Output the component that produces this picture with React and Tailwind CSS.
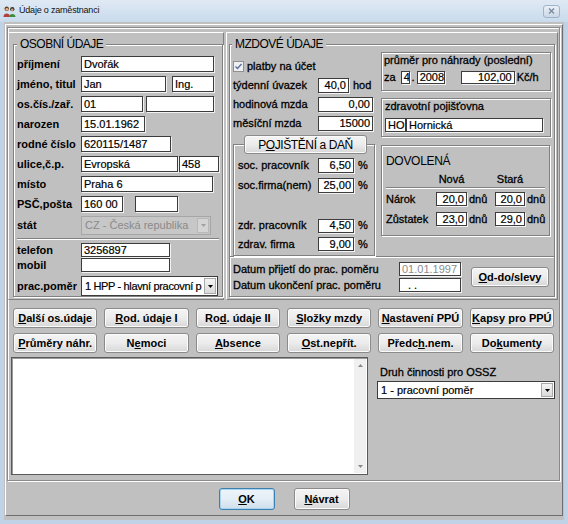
import React from "react";

const FONT = "font-['Liberation_Sans',Arial,sans-serif]";

function Box({ className = "", children, right = false, gray = false }) {
  return (
    <div
      className={`shrink-0 bg-white border border-[#3c3c3c] shadow-[1px_1px_0_#f2f2f2] text-[11px] leading-none flex items-center px-[2px] overflow-hidden whitespace-nowrap [-webkit-text-stroke:0.2px] ${
        right ? "justify-end" : ""
      } ${gray ? "text-[#8c8c8c] [-webkit-text-stroke:0px]" : "text-black"} ${className}`}
    >
      {children}
    </div>
  );
}

function LB({ className = "", children }) {
  return <span className={`text-[11px] font-bold leading-none whitespace-nowrap ${className}`}>{children}</span>;
}

function LN({ className = "", children }) {
  return (
    <span className={`text-[11px] leading-none whitespace-nowrap [-webkit-text-stroke:0.3px] ${className}`}>
      {children}
    </span>
  );
}

function Btn({ className = "", children }) {
  return (
    <button
      type="button"
      className={`flex items-center justify-center rounded-[3px] border border-[#8b8b8b] bg-linear-to-b from-[#f4f4f4] via-[#ececec] to-[#d7d7d7] text-[11px] font-bold text-black leading-none whitespace-nowrap shadow-[inset_0_0_0_1px_#fbfbfb] ${className}`}
    >
      {children}
    </button>
  );
}

function Arrow({ color = "#000" }) {
  return (
    <svg width="5" height="3" viewBox="0 0 5 3">
      <path d="M0 0h5L2.5 3z" fill={color} />
    </svg>
  );
}

function Combo({ className = "", textClass = "", children, disabled = false }) {
  return (
    <div
      className={`shrink-0 flex border ${
        disabled ? "border-[#a6a6a6] bg-[#c7c7c7] text-[#8a8a8a]" : "border-[#3c3c3c] bg-white text-black [-webkit-text-stroke:0.2px]"
      } ${className}`}
    >
      <div className={`flex-1 flex items-center px-[3px] text-[11px] leading-none overflow-hidden whitespace-nowrap ${textClass}`}>
        {children}
      </div>
      <div
        className={`w-[12px] my-[1px] mr-[1px] flex items-center justify-center border ${
          disabled ? "border-[#b8b8b8] bg-[#d4d4d4]" : "border-[#a9a9a9] bg-linear-to-b from-[#f5f5f5] to-[#dadada]"
        }`}
      >
        <Arrow color={disabled ? "#a0a0a0" : "#000"} />
      </div>
    </div>
  );
}

function Etched({ className = "", children }) {
  return (
    <div className={`border border-[#808080] shadow-[inset_1px_1px_0_#ffffff,1px_1px_0_#ffffff] ${className}`}>
      {children}
    </div>
  );
}

function TitleBar() {
  return (
    <div className="h-[22px] shrink-0 flex items-center pl-[3px] pr-[8px] bg-linear-to-b from-[#dfe9f4] to-[#c9dbec]">
      <svg width="13" height="13" viewBox="0 0 14 13">
        <circle cx="4" cy="3.5" r="2.4" fill="#6b3f22" />
        <circle cx="4.2" cy="4.2" r="1.5" fill="#e2b48e" />
        <path d="M0.5 12.5C0.5 7.5 7.5 7.5 7.5 12.5z" fill="#b3403a" />
        <circle cx="10" cy="4" r="2.3" fill="#2b2f28" />
        <circle cx="10" cy="4.6" r="1.4" fill="#d9a98a" />
        <path d="M6.5 12.5C6.5 8 13.5 8 13.5 12.5z" fill="#3d8b3b" />
      </svg>
      <span className="ml-[3px] text-[9px] tracking-[-0.2px] text-[#111]">Údaje o zaměstnanci</span>
      <div className="flex-1" />
      <div className="w-[17px] h-[13px] rounded-[3px] border border-[#9fb3c9] bg-linear-to-b from-[#eaf0f6] to-[#cbd8e6] flex items-center justify-center">
        <svg width="7" height="6" viewBox="0 0 7 6">
          <path d="M1 0.5l5 5M6 0.5l-5 5" stroke="#7a8ba0" strokeWidth="1.4" />
        </svg>
      </div>
    </div>
  );
}

function LeftPanel() {
  return (
    <div className="w-[216px] shrink-0 border border-t-white border-l-white border-r-[#808080] border-b-[#808080]">
      <fieldset className="mt-[4px] ml-[4px] mr-[1px] h-[260px] border border-[#808080] shadow-[inset_1px_1px_0_#ffffff,1px_1px_0_#ffffff] px-[3px]">
        <legend className="px-[3px] h-[14px] leading-[14px] text-[12px] tracking-[-0.5px] bg-[#c0c0c0]">
          OSOBNÍ ÚDAJE
        </legend>
        <div className="mt-[3px] flex flex-col">
          <div className="flex items-center h-[20px]">
            <LB className="w-[64px]">příjmení</LB>
            <Box className="w-[133px] h-[16px]">Dvořák</Box>
          </div>
          <div className="flex items-center h-[20px]">
            <LB className="w-[64px]">jméno, titul</LB>
            <Box className="w-[85px] h-[16px]">Jan</Box>
            <Box className="ml-[6px] w-[42px] h-[16px]">Ing.</Box>
          </div>
          <div className="flex items-center h-[20px]">
            <LB className="w-[64px]">os.čís./zař.</LB>
            <Box className="w-[62px] h-[16px]">01</Box>
            <Box className="ml-[3px] w-[68px] h-[16px]"></Box>
          </div>
          <div className="flex items-center h-[20px]">
            <LB className="w-[64px]">narozen</LB>
            <Box className="w-[64px] h-[16px]">15.01.1962</Box>
          </div>
          <div className="flex items-center h-[20px]">
            <LB className="w-[64px]">rodné číslo</LB>
            <Box className="w-[90px] h-[16px]">620115/1487</Box>
          </div>
          <div className="flex items-center h-[20px]">
            <LB className="w-[64px]">ulice,č.p.</LB>
            <Box className="w-[97px] h-[16px]">Evropská</Box>
            <Box className="ml-[1px] w-[40px] h-[16px]">458</Box>
          </div>
          <div className="flex items-center h-[20px]">
            <LB className="w-[64px]">místo</LB>
            <Box className="w-[132px] h-[16px]">Praha 6</Box>
          </div>
          <div className="flex items-center h-[20px]">
            <LB className="w-[64px]">PSČ,pošta</LB>
            <Box className="w-[42px] h-[16px]">160 00</Box>
            <Box className="ml-[12px] w-[43px] h-[16px]"></Box>
          </div>
          <div className="flex items-center h-[22px]">
            <LB className="w-[64px]">stát</LB>
            <Combo disabled className="w-[130px] h-[19px]">
              CZ - Česká republika
            </Combo>
          </div>
          <div className="mt-[2px] h-[2px] border-t border-t-[#808080] border-b border-b-white" />
          <div className="mt-[3px] flex items-center h-[14px]">
            <LB className="w-[64px]">telefon</LB>
            <Box className="w-[89px] h-[14px]">3256897</Box>
          </div>
          <div className="mt-[1px] flex items-center h-[14px]">
            <LB className="w-[64px]">mobil</LB>
            <Box className="w-[89px] h-[14px]"></Box>
          </div>
          <div className="mt-[4px] flex items-center h-[20px]">
            <LB className="w-[64px]">prac.poměr</LB>
            <Combo className="w-[137px] h-[20px]" textClass="px-[2px] tracking-[-0.35px]">
              1 HPP - hlavní pracovní p
            </Combo>
          </div>
        </div>
      </fieldset>
    </div>
  );
}

function RightPanel() {
  return (
    <div className="w-[332px] shrink-0 border border-t-white border-l-white border-r-[#808080] border-b-[#808080]">
      <fieldset className="mt-[4px] ml-[2px] mr-[2px] h-[260px] border border-[#808080] shadow-[inset_1px_1px_0_#ffffff,1px_1px_0_#ffffff] px-[2px]">
        <legend className="px-[3px] h-[14px] leading-[14px] text-[12px] tracking-[-0.5px] bg-[#c0c0c0]">
          MZDOVÉ ÚDAJE
        </legend>
        <div className="flex h-[205px]">
          <div className="w-[144px] shrink-0 flex flex-col">
            <div className="mt-[6px] flex items-center h-[19px] pl-[1px]">
              <svg width="11" height="11" viewBox="0 0 11 11">
                <rect x="0.5" y="0.5" width="10" height="10" fill="#eef0f4" stroke="#8f8f8f" />
                <path d="M2.5 5.5l2 2 4-4.5" stroke="#5c6f94" strokeWidth="1.4" fill="none" />
              </svg>
              <LN className="ml-[3px]">platby na účet</LN>
            </div>
            <div className="flex items-center h-[19px] pl-[1px]">
              <LN className="w-[85px]">týdenní úvazek</LN>
              <Box right className="w-[31px] h-[15px]">40,0</Box>
              <LN className="ml-[4px]">hod</LN>
            </div>
            <div className="flex items-center h-[19px] pl-[1px]">
              <LN className="w-[85px]">hodinová mzda</LN>
              <Box right className="w-[55px] h-[15px]">0,00</Box>
            </div>
            <div className="flex items-center h-[19px] pl-[1px]">
              <LN className="w-[85px]">měsíční mzda</LN>
              <Box right className="w-[55px] h-[15px]">15000</Box>
            </div>
            <fieldset className="mt-[2px] ml-[1px] w-[142px] h-[121px] border border-[#808080] shadow-[inset_1px_1px_0_#ffffff,1px_1px_0_#ffffff]">
              <legend className="ml-[10px] p-0">
                <button
                  type="button"
                  className="w-[123px] h-[19px] flex items-center justify-center rounded-[3px] border border-[#8b8b8b] bg-linear-to-b from-[#f4f4f4] via-[#ececec] to-[#d7d7d7] shadow-[inset_0_0_0_1px_#fbfbfb] text-[12px] tracking-[-0.4px] leading-none"
                >
                  P<span className="underline">O</span>JIŠTĚNÍ a DAŇ
                </button>
              </legend>
              <div className="flex flex-col pl-[4px]">
                <div className="mt-[1px] flex items-center h-[20px]">
                  <LN className="w-[80px]">soc. pracovník</LN>
                  <Box right className="w-[36px] h-[15px]">6,50</Box>
                  <LN className="ml-[4px]">%</LN>
                </div>
                <div className="flex items-center h-[20px]">
                  <LN className="w-[80px]">soc.firma(nem)</LN>
                  <Box right className="w-[36px] h-[15px]">25,00</Box>
                  <LN className="ml-[4px]">%</LN>
                </div>
                <div className="mt-[21px] flex items-center h-[19px]">
                  <LN className="w-[80px]">zdr. pracovník</LN>
                  <Box right className="w-[36px] h-[14px]">4,50</Box>
                  <LN className="ml-[4px]">%</LN>
                </div>
                <div className="flex items-center h-[18px]">
                  <LN className="w-[80px]">zdrav. firma</LN>
                  <Box right className="w-[36px] h-[14px]">9,00</Box>
                  <LN className="ml-[4px]">%</LN>
                </div>
              </div>
            </fieldset>
          </div>
          <div className="ml-[5px] w-[170px] shrink-0 flex flex-col">
            <Etched className="mt-[1px] h-[39px] flex flex-col pl-[2px] pt-[2px]">
              <LN className="h-[14px] leading-[14px]">průměr pro náhrady (poslední)</LN>
              <div className="mt-[1px] flex items-center h-[14px]">
                <LN>za</LN>
                <Box className="ml-[5px] w-[9px] h-[13px] px-[1px]">4</Box>
                <LN className="w-[7px] text-center">.</LN>
                <Box className="w-[28px] h-[13px] px-[1px]">2008</Box>
                <Box right className="ml-[16px] w-[54px] h-[13px]">102,00</Box>
                <LN className="ml-[2px]">Kč/h</LN>
              </div>
            </Etched>
            <Etched className="mt-[7px] h-[39px] flex flex-col pl-[3px] pt-[2px]">
              <LN className="h-[14px] leading-[14px]">zdravotní pojišťovna</LN>
              <div className="mt-[3px] flex items-center">
                <Box className="w-[21px] h-[14px] px-[1px]">HO</Box>
                <Box className="w-[137px] h-[14px]">Hornická</Box>
              </div>
            </Etched>
            <Etched className="mt-[8px] h-[91px] w-[169px] flex flex-col pl-[4px] pt-[8px]">
              <span className="h-[14px] leading-[14px] text-[12px] tracking-[-0.3px]">DOVOLENÁ</span>
              <div className="mt-[4px] flex items-center h-[14px]">
                <span className="w-[50px]" />
                <LN className="w-[31px] text-center">Nová</LN>
                <span className="w-[28px]" />
                <LN className="w-[30px] text-center">Stará</LN>
              </div>
              <div className="mt-[1px] w-[159px] h-[2px] border-t border-t-[#808080] border-b border-b-white" />
              <div className="flex items-center h-[20px]">
                <LN className="w-[50px]">Nárok</LN>
                <Box right className="w-[31px] h-[14px]">20,0</Box>
                <LN className="w-[28px] pl-[2px]">dnů</LN>
                <Box right className="w-[30px] h-[14px]">20,0</Box>
                <LN className="pl-[2px]">dnů</LN>
              </div>
              <div className="flex items-center h-[20px]">
                <LN className="w-[50px]">Zůstatek</LN>
                <Box right className="w-[31px] h-[14px]">23,0</Box>
                <LN className="w-[28px] pl-[2px]">dnů</LN>
                <Box right className="w-[30px] h-[14px]">29,0</Box>
                <LN className="pl-[2px]">dnů</LN>
              </div>
            </Etched>
          </div>
        </div>
        <div className="-mx-[2px] h-[2px] border-t border-t-[#808080] border-b border-b-white" />
        <div className="flex items-center h-[38px]">
          <div className="flex flex-col">
            <div className="flex items-center h-[14px] pl-[1px]">
              <LN className="w-[166px]">Datum přijetí do prac. poměru</LN>
              <Box gray className="w-[62px] h-[14px]">01.01.1997</Box>
            </div>
            <div className="mt-[2px] flex items-center h-[14px] pl-[1px]">
              <LN className="w-[166px]">Datum ukončení prac. poměru</LN>
              <Box className="w-[62px] h-[14px] pl-[8px]">. .</Box>
            </div>
          </div>
          <Btn className="ml-[10px] w-[78px] h-[20px]">
            <span className="underline">O</span>d-do/slevy
          </Btn>
        </div>
      </fieldset>
    </div>
  );
}

function Buttons() {
  return (
    <div className="mt-[8px] ml-[5px] w-[541px] grid grid-cols-6 gap-x-[7px] gap-y-[5px]">
      <Btn className="h-[20px]"><span className="underline">D</span>alší os.údaje</Btn>
      <Btn className="h-[20px]"><span className="underline">R</span>od. údaje I</Btn>
      <Btn className="h-[20px]">Ro<span className="underline">d</span>. údaje II</Btn>
      <Btn className="h-[20px]"><span className="underline">S</span>ložky mzdy</Btn>
      <Btn className="h-[20px]"><span className="underline">N</span>astavení PPÚ</Btn>
      <Btn className="h-[20px]"><span className="underline">K</span>apsy pro PPÚ</Btn>
      <Btn className="h-[20px]"><span className="underline">P</span>růměry náhr.</Btn>
      <Btn className="h-[20px]">N<span className="underline">e</span>moci</Btn>
      <Btn className="h-[20px]"><span className="underline">A</span>bsence</Btn>
      <Btn className="h-[20px]"><span className="underline">O</span>st.nepřít.</Btn>
      <Btn className="h-[20px]">Předc<span className="underline">h</span>.nem.</Btn>
      <Btn className="h-[20px]">Do<span className="underline">k</span>umenty</Btn>
    </div>
  );
}

function Bottom() {
  return (
    <div className="mt-[4px] flex">
      <div className="ml-[3px] w-[357px] h-[118px] bg-white border border-[#5a5a5a] shadow-[inset_1px_1px_0_#9a9a9a] flex justify-end">
        <div className="w-[12px] my-[1px] mr-[1px] bg-[#f0f0f0] flex flex-col items-center justify-between py-[5px]">
          <svg width="5" height="3" viewBox="0 0 5 3">
            <path d="M0 3h5L2.5 0z" fill="#8a8a8a" />
          </svg>
          <svg width="5" height="3" viewBox="0 0 5 3">
            <path d="M0 0h5L2.5 3z" fill="#8a8a8a" />
          </svg>
        </div>
      </div>
      <div className="ml-[9px] w-[178px] flex flex-col">
        <LN className="mt-[10px] h-[14px] leading-[14px] pl-[3px]">Druh činnosti pro OSSZ</LN>
        <Combo className="w-[178px] h-[18px]">1 - pracovní poměr</Combo>
      </div>
    </div>
  );
}

export default function App() {
  return (
    <div className={`w-[568px] h-[524px] flex flex-col bg-[#bfd2e6] overflow-hidden text-black ${FONT}`}>
      <TitleBar />
      <div className="flex-1 mx-[4px] mb-[4px] bg-[#c0c0c0] pt-[2px] px-[1px] pb-[4px] flex flex-col">
        <div className="flex-1 flex flex-col border border-t-white border-l-white border-r-[#6e6e6e] border-b-[#6e6e6e]">
          <div className="mt-[2px] ml-[1px] mr-[2px] border border-[#8a8a8a] shadow-[inset_1px_1px_0_#ffffff,1px_1px_0_#ffffff] pb-[5px] flex flex-col">
            <div className="flex mt-[4px] h-[268px] gap-[2px]">
              <LeftPanel />
              <RightPanel />
            </div>
            <Buttons />
            <Bottom />
          </div>
          <div className="flex justify-center gap-[19px] mt-[7px]">
            <button
              type="button"
              className="w-[56px] h-[22px] flex items-center justify-center rounded-[3px] border border-[#3c7fb1] bg-linear-to-b from-[#eef5fa] via-[#e3eef6] to-[#cfdfeb] shadow-[inset_0_0_0_1px_#a8d4ef] text-[11px] font-bold leading-none"
            >
              <span className="underline">O</span>K
            </button>
            <Btn className="w-[56px] h-[22px]">
              <span className="underline">N</span>ávrat
            </Btn>
          </div>
        </div>
      </div>
    </div>
  );
}
